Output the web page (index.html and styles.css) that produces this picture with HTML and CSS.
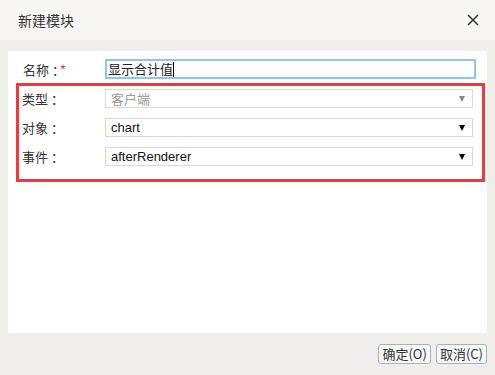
FILE: index.html
```html
<!DOCTYPE html>
<html lang="zh-CN">
<head>
    <meta charset="UTF-8">
    <title>新建模块</title>
    <link rel="stylesheet" href="styles.css">
</head>
<body>

<div class="dialog-header">
    <span class="dialog-title">新建模块</span>
    <svg class="close-btn" width="12" height="12" viewBox="0 0 12 12">
        <path d="M1 1 L11 11 M11 1 L1 11" stroke="#333" stroke-width="1.5" fill="none"/>
    </svg>
</div>

<div class="panel">
    <div class="form-row name-row">
        <label class="label">名称<span class="colon">：</span><span class="required">*</span></label>
        <div class="text-input">显示合计值<span class="caret"></span></div>
    </div>

    <div class="highlight-box">
        <div class="form-row">
            <label class="label">类型<span class="colon">：</span></label>
            <div class="select disabled"><span>客户端</span><span class="arrow"></span></div>
        </div>
        <div class="form-row">
            <label class="label">对象<span class="colon">：</span></label>
            <div class="select"><span>chart</span><span class="arrow"></span></div>
        </div>
        <div class="form-row">
            <label class="label">事件<span class="colon">：</span></label>
            <div class="select"><span>afterRenderer</span><span class="arrow"></span></div>
        </div>
    </div>
</div>

<div class="dialog-footer">
    <button class="btn">确定(O)</button>
    <button class="btn">取消(C)</button>
</div>

</body>
</html>
```

FILE: styles.css
```css
body {
    margin: 0;
    background: #efeeeb;
    font-family: "Noto Sans CJK SC", "Liberation Sans", sans-serif;
    font-size: 13px;
    color: #333;
}
.dialog-header {
    height: 40px;
    background: #f7f6f4;
    display: flex;
    align-items: center;
    justify-content: space-between;
    padding: 0 16px 0 18px;
}
.dialog-title {
    font-size: 14px;
    color: #333;
}
.close-btn {
    display: block;
}
.panel {
    background: #fff;
    margin: 11px 8px 0 8px;
    height: 274px;
    padding-top: 8px;
}
.form-row {
    display: flex;
    align-items: center;
    height: 19px;
}
.name-row {
    height: 20px;
    padding-left: 15px;
    margin-bottom: 4px;
}
.label {
    width: 82px;
    flex-shrink: 0;
    color: #333;
}
.colon {
    margin-left: 3px;
    letter-spacing: -5px;
}
.required {
    color: #e33;
}
.text-input {
    width: 366px;
    height: 16px;
    border: 2px solid #8ec5f2;
    font-size: 13px;
    line-height: 16px;
    padding-left: 1px;
    color: #222;
    display: flex;
    align-items: center;
}
.caret {
    display: inline-block;
    width: 1px;
    height: 15px;
    background: #000;
}
.highlight-box {
    margin: 0 2px 0 8px;
    border: 3px solid #f03a3a;
    padding: 3px 9px 13px 3px;
    display: flex;
    flex-direction: column;
    gap: 10px;
}
.highlight-box .label {
    width: 83px;
}
.select {
    flex: 1;
    height: 17px;
    border: 1px solid #dcd8d2;
    display: flex;
    align-items: center;
    justify-content: space-between;
    padding: 0 7px 0 5px;
    font-family: "Liberation Sans", "Noto Sans CJK SC", sans-serif;
    font-size: 13px;
    color: #111;
}
.select.disabled {
    color: #999;
    font-family: "Noto Sans CJK SC", sans-serif;
}
.arrow {
    width: 0;
    height: 0;
    border-left: 3.5px solid transparent;
    border-right: 3.5px solid transparent;
    border-top: 6px solid #000;
}
.select.disabled .arrow {
    border-top-color: #888;
}
.dialog-footer {
    display: flex;
    justify-content: flex-end;
    gap: 5px;
    padding: 11px 8px 0 0;
}
.btn {
    height: 20px;
    padding: 0 3px;
    border: 1px solid #a9b2ba;
    border-radius: 3px;
    background: #f7f7f7;
    font-family: "Noto Sans CJK SC", sans-serif;
    font-size: 13px;
    color: #333;
    line-height: 18px;
}
```
